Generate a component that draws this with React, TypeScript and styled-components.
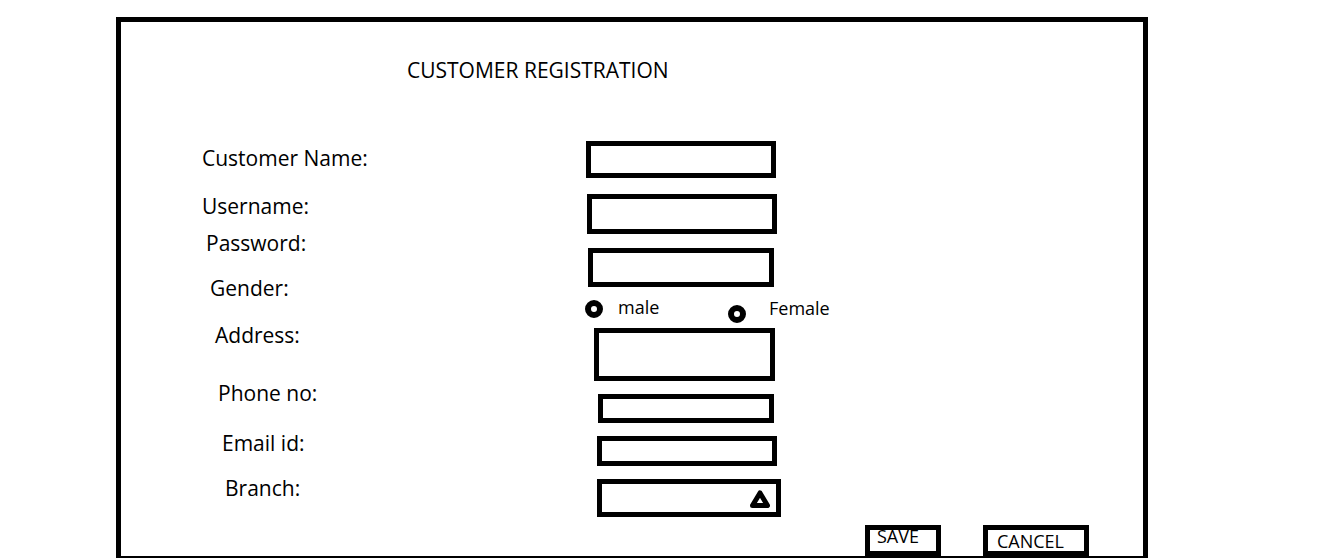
import React from "react";
import styled, { createGlobalStyle } from "styled-components";

const fields = [
  { label: "Customer Name:", indent: 1, gap: 0 },
  { label: "Username:", indent: 1, gap: 27 },
  { label: "Password:", indent: 5, gap: 16 },
  { label: "Gender:", indent: 9, gap: 24 },
  { label: "Address:", indent: 14, gap: 26 },
  { label: "Phone no:", indent: 17, gap: 37 },
  { label: "Email id:", indent: 21, gap: 29 },
  { label: "Branch:", indent: 24, gap: 24 },
];

const App = () => {
  return (
    <>
      <GlobalStyle />
      <Page>
        <Frame>
          <Title>CUSTOMER REGISTRATION</Title>
          <Form>
            <LabelColumn>
              {fields.map((f) => (
                <Label key={f.label} indent={f.indent} gap={f.gap}>
                  {f.label}
                </Label>
              ))}
            </LabelColumn>

            <FieldColumn>
              <TextBox w={190} h={37} ml={1} mt={0} />
              <TextBox w={190} h={40} ml={2} mt={16} />
              <TextBox w={186} h={39} ml={3} mt={14} />
              <RadioRow>
                <Option width={143}>
                  <Radio top={0} />
                  <OptionText top={0} gap={15}>male</OptionText>
                </Option>
                <Option>
                  <Radio top={5} />
                  <OptionText top={1} gap={23}>Female</OptionText>
                </Option>
              </RadioRow>
              <TextBox w={181} h={53} ml={9} mt={6} />
              <TextBox w={176} h={29} ml={13} mt={13} />
              <TextBox w={180} h={30} ml={12} mt={13} />
              <SelectBox w={184} h={38} ml={12} mt={13}>
                <svg width="20" height="18" viewBox="0 0 20 18">
                  <polygon
                    points="10,3 17.5,15.5 2.5,15.5"
                    fill="#fff"
                    stroke="#000"
                    strokeWidth="5"
                    strokeLinejoin="round"
                  />
                </svg>
              </SelectBox>
            </FieldColumn>
          </Form>

          <Footer>
            <Button width={76} padLeft={7} padTop={0}>
              SAVE
            </Button>
            <Button width={106} padLeft={9} padTop={5}>
              CANCEL
            </Button>
          </Footer>
        </Frame>
      </Page>
    </>
  );
};

export default App;

const GlobalStyle = createGlobalStyle`
  html, body {
    margin: 0;
    padding: 0;
    background: #fff;
    overflow: hidden;
  }
  body {
    font-family: "Open Sans", "Liberation Sans", sans-serif;
    color: #000;
  }
`;

const Page = styled.div`
  padding: 17px 0 0 116px;
`;

const Frame = styled.div`
  box-sizing: border-box;
  width: 1032px;
  height: 544px;
  border: 5px solid #000;
  display: flex;
  flex-direction: column;
`;

const Title = styled.div`
  margin: 38px 0 0 286px;
  font-size: 21px;
  line-height: 21px;
`;

const Form = styled.div`
  display: flex;
`;

const LabelColumn = styled.div`
  width: 464px;
  box-sizing: border-box;
  padding: 67px 0 0 80px;
  display: flex;
  flex-direction: column;
  align-items: flex-start;
`;

const Label = styled.div<{ indent: number; gap: number }>`
  margin-left: ${(p) => p.indent}px;
  margin-top: ${(p) => p.gap}px;
  font-size: 21px;
  line-height: 21px;
  white-space: nowrap;
`;

const FieldColumn = styled.div`
  padding-top: 60px;
  display: flex;
  flex-direction: column;
  align-items: flex-start;
`;

const TextBox = styled.div<{ w: number; h: number; ml: number; mt: number }>`
  box-sizing: border-box;
  width: ${(p) => p.w}px;
  height: ${(p) => p.h}px;
  margin-left: ${(p) => p.ml}px;
  margin-top: ${(p) => p.mt}px;
  border: 5px solid #000;
  background: #fff;
`;

const SelectBox = styled(TextBox)`
  display: flex;
  justify-content: flex-end;
  padding: 6px 6px 0 0;
`;

const RadioRow = styled.div`
  display: flex;
  align-items: flex-start;
  height: 22px;
  margin-top: 13px;
`;

const Option = styled.div<{ width?: number }>`
  display: flex;
  align-items: flex-start;
  width: ${(p) => (p.width ? `${p.width}px` : "auto")};
`;

const Radio = styled.span<{ top: number }>`
  box-sizing: border-box;
  width: 18px;
  height: 18px;
  margin-top: ${(p) => p.top}px;
  border: 6px solid #000;
  border-radius: 50%;
`;

const OptionText = styled.span<{ top: number; gap: number }>`
  margin-top: ${(p) => p.top}px;
  margin-left: ${(p) => p.gap}px;
  font-size: 18px;
  line-height: 14px;
`;

const Footer = styled.div`
  margin-top: auto;
  display: flex;
  justify-content: flex-end;
  gap: 42px;
  padding-right: 54px;
`;

const Button = styled.div<{ width: number; padLeft: number; padTop: number }>`
  box-sizing: border-box;
  width: ${(p) => p.width}px;
  height: 31px;
  border: 5px solid #000;
  padding: ${(p) => p.padTop}px 0 0 ${(p) => p.padLeft}px;
  font-size: 18px;
  line-height: 12px;
`;
